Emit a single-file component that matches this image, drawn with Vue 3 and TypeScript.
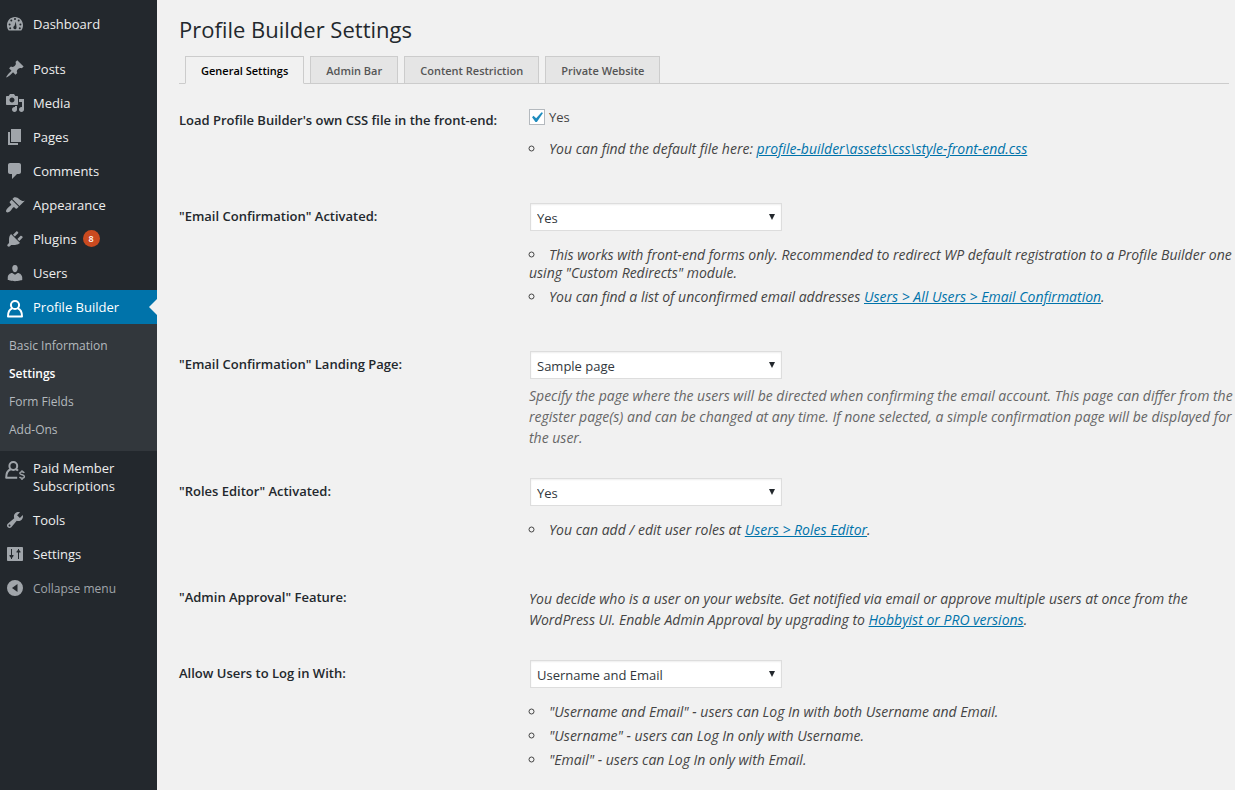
<script setup lang="ts">
import { ref } from 'vue'

interface MenuItem {
  label: string
  icon: string
  badge?: number
}

const icons: Record<string, string> = {
  dashboard:
    'M3.76 16.5h12.48c1.34-1.63 1.76-3.5 1.76-5.5 0-4.41-3.58-8-8-8s-8 3.590-8 8c0 2 .42 3.870 1.760 5.500zM10 4a1 1 0 1 1 0 2a1 1 0 1 1 0-2zM6.300 5.500a1 1 0 1 1 0 2a1 1 0 1 1 0-2zM13.700 5.500a1 1 0 1 1 0 2a1 1 0 1 1 0-2zM4.600 9.500a1 1 0 1 1 0 2a1 1 0 1 1 0-2zM15.400 9.500a1 1 0 1 1 0 2a1 1 0 1 1 0-2zM10.800 7.500l.7 5.400c.3 1.500-.5 2.400-1.600 2.400s-1.900-1-1.500-2.200c.2-.7.6-1.100 1.100-1.300zM5.200 13.200a1 1 0 1 1 0 2a1 1 0 1 1 0-2zM14.800 13.200a1 1 0 1 1 0 2a1 1 0 1 1 0-2z',
  post: 'M10.44 3.02l1.82-1.82 6.36 6.35-1.83 1.82c-1.05-.68-2.48-.57-3.41.36l-.75.75c-.92.93-1.04 2.35-.35 3.41l-1.83 1.82-2.41-2.41-2.8 2.79c-.42.42-3.38 2.71-3.8 2.29s1.86-3.39 2.28-3.81l2.79-2.79L4.1 9.36l1.83-1.82c1.05.69 2.48.57 3.4-.36l.75-.75c.93-.92 1.05-2.35.36-3.41z',
  media:
    'M13 11V4c0-.55-.45-1-1-1h-1.67L9 1H5L3.67 3H2c-.55 0-1 .45-1 1v7c0 .55.45 1 1 1h10c.55 0 1-.45 1-1zM7 4.5c1.38 0 2.5 1.12 2.5 2.5S8.38 9.5 7 9.5 4.5 8.38 4.5 7 5.62 4.5 7 4.5zM14 6h5v10.5c0 1.38-1.12 2.5-2.5 2.5S14 17.88 14 16.5s1.12-2.5 2.5-2.5c.17 0 .34.02.5.05V9h-3V6zM10 14.05V13h2v3.5c0 1.38-1.12 2.5-2.5 2.5S7 17.88 7 16.5 8.12 14 9.5 14c.17 0 .34.02.5.05z',
  page: 'M6 15V2h10v13H6zM5 16h8v2H3V5h2v11z',
  comments: 'M5 2h9c1.1 0 2 .9 2 2v7c0 1.1-.9 2-2 2h-2l-5 5v-5H5c-1.1 0-2-.9-2-2V4c0-1.1.9-2 2-2z',
  appearance:
    'M14.48 11.06L7.41 3.99l1.5-1.5c.5-.56 2.3-.47 3.51.32 1.21.8 1.43 1.28 2.91 2.1 1.18.64 2.45 1.26 4.45.85zM13.77 11.77L6.7 4.7 4.93 6.47c-.39.39-.39 1.02 0 1.41l1.06 1.06c.39.39.39 1.03 0 1.42-.6.6-1.43 1.11-2.21 1.69-.35.26-.7.53-1.01.84C1.43 14.23.4 16.08 1.4 17.07c.99 1 2.84-.03 4.18-1.36.31-.31.58-.66.85-1.02.57-.78 1.08-1.61 1.69-2.21.39-.39 1.02-.39 1.41 0l1.06 1.06c.39.39 1.02.39 1.41 0z',
  plugins:
    'M13.11 4.36L9.87 7.6 8 5.73l3.24-3.24c.35-.34 1.05-.2 1.56.32.52.51.66 1.21.31 1.55zM5.11 6.13l.91-1.12 9.01 9.01-1.19.84c-.71.71-2.63 1.16-3.82 1.16H6.14L4.9 17.26c-.59.59-1.54.59-2.12 0-.59-.58-.59-1.53 0-2.12l1.24-1.24v-3.88c0-1.13.4-3.19 1.09-3.89zM12.37 10.1l3.24-3.24c.34-.35 1.04-.21 1.55.31.52.51.66 1.21.31 1.55l-3.24 3.25z',
  users:
    'M10 9.25c-2.27 0-2.73-3.44-2.73-3.44C7 4.02 7.82 2 9.97 2c2.16 0 2.98 2.02 2.71 3.81 0 0-.41 3.44-2.68 3.44zM10 11.82L12.72 10c2.39 0 4.52 2.33 4.52 4.53v2.49s-3.65 1.13-7.24 1.13c-3.65 0-7.24-1.13-7.24-1.13v-2.49c0-2.25 1.94-4.48 4.47-4.48z',
  tools:
    'M16.68 9.77c-1.34 1.34-3.3 1.67-4.95.99l-5.41 6.52c-.99.99-2.59.99-3.58 0s-.99-2.59 0-3.57l6.52-5.42c-.68-1.65-.35-3.61.99-4.95 1.28-1.28 3.12-1.62 4.72-1.06l-2.89 2.89 2.82 2.82 2.86-2.87c.53 1.58.18 3.39-1.08 4.65zM3.81 16.21c.4.39 1.04.39 1.43 0 .4-.4.4-1.04 0-1.43-.39-.4-1.03-.4-1.43 0-.39.39-.39 1.03 0 1.43z',
  settings:
    'M3 3h14c.55 0 1 .45 1 1v12c0 .55-.45 1-1 1H3c-.55 0-1-.45-1-1V4c0-.55.45-1 1-1zM6 5v6H4.500v1L6 14v1h1v-1l1.500-2v-1H7V5zM13 5v1l-1.500 1.500v1H13v6.500h1V8.500h1.500v-1L14 6V5z',
  collapse: 'M10 2a8 8 0 1 1 0 16a8 8 0 1 1 0-16zM12.5 6L7 10l5.500 4z',
}

const contentItems: MenuItem[] = [
  { label: 'Posts', icon: 'post' },
  { label: 'Media', icon: 'media' },
  { label: 'Pages', icon: 'page' },
  { label: 'Comments', icon: 'comments' },
  { label: 'Appearance', icon: 'appearance' },
  { label: 'Plugins', icon: 'plugins', badge: 8 },
  { label: 'Users', icon: 'users' },
]
const submenu = ['Basic Information', 'Settings', 'Form Fields', 'Add-Ons']
const lowerItems: MenuItem[] = [
  { label: 'Tools', icon: 'tools' },
  { label: 'Settings', icon: 'settings' },
]
const tabs = ['General Settings', 'Admin Bar', 'Content Restriction', 'Private Website']

const loadCss = ref(true)
const emailConfirmation = ref('Yes')
const landingPage = ref('Sample page')
const rolesEditor = ref('Yes')
const loginWith = ref('Username and Email')
</script>

<template>
  <div class="layout">
    <nav class="sidebar" aria-label="Main menu">
      <a href="#" class="item">
        <svg class="icon" viewBox="0 0 20 20"><path fill-rule="evenodd" :d="icons.dashboard" /></svg>
        <span>Dashboard</span>
      </a>
      <div class="separator"></div>
      <a v-for="item in contentItems" :key="item.label" href="#" class="item">
        <svg class="icon" viewBox="0 0 20 20"><path fill-rule="evenodd" :d="icons[item.icon]" /></svg>
        <span>{{ item.label }}</span>
        <span v-if="item.badge" class="badge">{{ item.badge }}</span>
      </a>
      <a href="#" class="item current">
        <svg class="icon outline" viewBox="0 0 20 20">
          <circle cx="10" cy="8" r="4.1" />
          <path d="M7.2 11.400C4 12.500 3 15 3 19.500h14c0-4.500-1-7-4.200-8.100" />
        </svg>
        <span>Profile Builder</span>
      </a>
      <div class="submenu">
        <a v-for="name in submenu" :key="name" href="#" :class="{ active: name === 'Settings' }">{{ name }}</a>
      </div>
      <a href="#" class="item">
        <svg class="icon outline member" viewBox="0 0 20 20">
          <circle cx="8.300" cy="8" r="3.900" />
          <path d="M5.700 11.300C2.400 12.500 1.200 15 1.200 19.800h11M10.900 11.300c.9.300 1.600.8 2.100 1.400" />
          <path class="dollar" d="M19.300 14.800c-.5-.7-1.300-1-2.300-1-1.300 0-2.200.6-2.200 1.500 0 2 4.600 1 4.600 3.100 0 1-1 1.700-2.400 1.700-1.100 0-2-.4-2.500-1.300M17 12.200v1.600M17 20v2" />
        </svg>
        <span>Paid Member Subscriptions</span>
      </a>
      <a v-for="item in lowerItems" :key="item.label" href="#" class="item">
        <svg class="icon" viewBox="0 0 20 20"><path fill-rule="evenodd" :d="icons[item.icon]" /></svg>
        <span>{{ item.label }}</span>
      </a>
      <button type="button" class="item collapse">
        <svg class="icon" viewBox="0 0 20 20"><path fill-rule="evenodd" :d="icons.collapse" /></svg>
        <span>Collapse menu</span>
      </button>
    </nav>

    <main class="content">
      <h1>Profile Builder Settings</h1>
      <nav class="tabs" aria-label="Settings sections">
        <a v-for="(tab, i) in tabs" :key="tab" href="#" class="tab" :class="{ selected: i === 0 }">{{ tab }}</a>
      </nav>

      <form class="form">
        <div class="row">
          <label class="title" for="load-css">Load Profile Builder's own CSS file in the front-end:</label>
          <div class="field">
            <label class="check">
              <span class="box">
                <input id="load-css" v-model="loadCss" type="checkbox" />
                <svg v-if="loadCss" class="tick" viewBox="0 0 20 20"><path d="M14.830 4.890l1.340.94-5.810 8.380H9.020L5.780 9.670l1.340-1.250 2.570 2.400z" /></svg>
              </span>
              Yes
            </label>
            <ul>
              <li>You can find the default file here: <a href="#">profile-builder\assets\css\style-front-end.css</a></li>
            </ul>
          </div>
        </div>

        <div class="row">
          <label class="title" for="email-confirmation">"Email Confirmation" Activated:</label>
          <div class="field">
            <div class="select">
              <select id="email-confirmation" v-model="emailConfirmation">
                <option>Yes</option>
                <option>No</option>
              </select>
              <svg class="arrow" viewBox="0 0 6 6"><path d="M0 0h6L3 6z" /></svg>
            </div>
            <ul>
              <li>This works with front-end forms only. Recommended to redirect WP default registration to a Profile Builder one using "Custom Redirects" module.</li>
              <li>You can find a list of unconfirmed email addresses <a href="#">Users &gt; All Users &gt; Email Confirmation</a>.</li>
            </ul>
          </div>
        </div>

        <div class="row">
          <label class="title" for="landing-page">"Email Confirmation" Landing Page:</label>
          <div class="field">
            <div class="select">
              <select id="landing-page" v-model="landingPage">
                <option>Sample page</option>
              </select>
              <svg class="arrow" viewBox="0 0 6 6"><path d="M0 0h6L3 6z" /></svg>
            </div>
            <p class="description muted">Specify the page where the users will be directed when confirming the email account. This page can differ from the register page(s) and can be changed at any time. If none selected, a simple confirmation page will be displayed for the user.</p>
          </div>
        </div>

        <div class="row">
          <label class="title" for="roles-editor">"Roles Editor" Activated:</label>
          <div class="field">
            <div class="select">
              <select id="roles-editor" v-model="rolesEditor">
                <option>Yes</option>
                <option>No</option>
              </select>
              <svg class="arrow" viewBox="0 0 6 6"><path d="M0 0h6L3 6z" /></svg>
            </div>
            <ul>
              <li>You can add / edit user roles at <a href="#">Users &gt; Roles Editor</a>.</li>
            </ul>
          </div>
        </div>

        <div class="row">
          <div class="title">"Admin Approval" Feature:</div>
          <div class="field">
            <p class="description">You decide who is a user on your website. Get notified via email or approve multiple users at once from the WordPress UI. Enable Admin Approval by upgrading to <a href="#">Hobbyist or PRO versions</a>.</p>
          </div>
        </div>

        <div class="row">
          <label class="title" for="login-with">Allow Users to Log in With:</label>
          <div class="field">
            <div class="select">
              <select id="login-with" v-model="loginWith">
                <option>Username and Email</option>
                <option>Username</option>
                <option>Email</option>
              </select>
              <svg class="arrow" viewBox="0 0 6 6"><path d="M0 0h6L3 6z" /></svg>
            </div>
            <ul>
              <li>"Username and Email" - users can Log In with both Username and Email.</li>
              <li>"Username" - users can Log In only with Username.</li>
              <li>"Email" - users can Log In only with Email.</li>
            </ul>
          </div>
        </div>
      </form>
    </main>
  </div>
</template>

<style>
body {
  margin: 0;
  background: #f1f1f1;
}
</style>

<style scoped>
.layout {
  display: flex;
  min-height: 100vh;
  font-family: "Open Sans", "Noto Sans", sans-serif;
  font-size: 13px;
  line-height: 18px;
  color: #444;
}

.sidebar {
  flex: none;
  box-sizing: border-box;
  width: 157px;
  padding-top: 7px;
  background: #23282d;
}
.item {
  position: relative;
  box-sizing: border-box;
  display: flex;
  align-items: flex-start;
  gap: 8px;
  width: 100%;
  padding: 8px 8px 8px 5px;
  border: 0;
  background: none;
  color: #eee;
  font: inherit;
  text-align: left;
  text-decoration: none;
}
.icon {
  flex: none;
  width: 20px;
  height: 20px;
  margin: -1px 0;
  overflow: visible;
  fill: #a0a5aa;
}
.outline {
  fill: none;
  stroke: #fff;
  stroke-width: 2;
  stroke-linejoin: round;
}
.member {
  stroke: #a0a5aa;
}
.dollar {
  stroke-width: 1.4;
}
.separator {
  height: 11px;
}
.badge {
  width: 17px;
  height: 17px;
  margin-left: -2px;
  border-radius: 50%;
  background: #ca4a1f;
  color: #fff;
  font-size: 9px;
  font-weight: 600;
  line-height: 17px;
  text-align: center;
}
.current {
  background: #0073aa;
  color: #fff;
}
.current::after {
  content: "";
  position: absolute;
  top: 9px;
  right: 0;
  border: 8px solid transparent;
  border-left-width: 0;
  border-right-color: #f1f1f1;
}
.submenu {
  padding: 8px 0 7px;
  background: #32373c;
}
.submenu a {
  display: block;
  padding: 5px 9px;
  color: #b4b9be;
  font-size: 12px;
  text-decoration: none;
}
.submenu .active {
  color: #fff;
  font-weight: 600;
}
.collapse {
  color: #a0a5aa;
  font-size: 12px;
  line-height: 20px;
}

.content {
  flex: 1;
  min-width: 0;
  padding: 14px 0 0 22px;
}
h1 {
  margin: 0 0 12px;
  color: #23282d;
  font-size: 22px;
  font-weight: 400;
  line-height: 30px;
}
.tabs {
  display: flex;
  gap: 6px;
  margin-right: 6px;
  padding-left: 6px;
  border-bottom: 1px solid #ccc;
}
.tab {
  margin-bottom: -1px;
  padding: 5px 15px 3px;
  border: 1px solid #ccc;
  background: #e5e5e5;
  color: #555;
  font-size: 11px;
  font-weight: 600;
  text-decoration: none;
}
.selected {
  border-bottom-color: #f1f1f1;
  background: #f1f1f1;
  color: #000;
}

.form {
  padding-top: 8px;
}
.row {
  display: grid;
  grid-template-columns: 340px 1fr;
  column-gap: 10px;
}
.title {
  padding-top: 19px;
  color: #23282d;
  font-weight: 600;
}
.field {
  padding: 15px 0;
}
.check {
  display: flex;
  align-items: center;
  gap: 4px;
  min-height: 20px;
}
.box {
  position: relative;
  width: 16px;
  height: 16px;
}
.box input {
  appearance: none;
  display: block;
  box-sizing: border-box;
  width: 16px;
  height: 16px;
  margin: 0;
  border: 1px solid #b4b9be;
  background: #fff;
}
.tick {
  position: absolute;
  top: -2px;
  left: -3px;
  width: 21px;
  height: 21px;
  fill: #1e8cbe;
  pointer-events: none;
}
.select {
  position: relative;
  width: 252px;
  margin-left: 1px;
}
select {
  appearance: none;
  display: block;
  box-sizing: border-box;
  width: 100%;
  height: 28px;
  padding: 1px 24px 0 6px;
  border: 1px solid #ddd;
  border-radius: 0;
  background: #fff;
  box-shadow: inset 0 1px 2px rgba(0, 0, 0, 0.07);
  color: #32373c;
  font: inherit;
}
.arrow {
  position: absolute;
  top: 11px;
  right: 7px;
  width: 6px;
  height: 6px;
  fill: #23282d;
  pointer-events: none;
}
ul {
  margin: 15px 0;
  padding: 0;
  list-style: circle inside;
  font-size: 14px;
  font-style: italic;
}
.check + ul {
  margin-top: 13px;
}
li {
  margin-bottom: 6px;
}
.field a {
  color: #0073aa;
}
.description {
  margin: 6px 0 0;
  font-size: 14px;
  font-style: italic;
  line-height: 21px;
}
.description:first-child {
  margin-top: 4px;
}
.muted {
  color: #666;
}
</style>
